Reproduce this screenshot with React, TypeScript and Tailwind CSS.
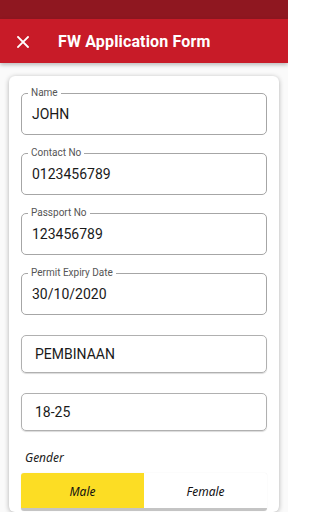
import React from "react";

function Outlined({ label, value, className = "" }: { label: string; value: string; className?: string }) {
  return (
    <div className={`relative h-[42px] rounded-[5px] border border-[#a6a6a6] flex items-center pl-[10px] ${className}`}>
      <span className="absolute left-[6px] top-[-7px] bg-white px-[3px] text-[10px] leading-[12px] text-[#555]">{label}</span>
      <span className="text-[14px] text-[#1a1a1a] pt-[1px]">{value}</span>
    </div>
  );
}

function Plain({ value, className = "" }: { value: string; className?: string }) {
  return (
    <div className={`h-[38px] rounded-[5px] border border-[#b0b0b0] shadow-[0_1px_1px_rgba(0,0,0,0.15)] flex items-center pl-[13px] ${className}`}>
      <span className="text-[14px] text-[#1a1a1a]">{value}</span>
    </div>
  );
}

export default function App() {
  return (
    <div className="w-[288px] h-[512px] overflow-hidden bg-[#fafafa] flex flex-col" style={{ fontFamily: "Roboto, 'Liberation Sans', sans-serif" }}>
      <div className="h-[19px] bg-[#8f1720] shrink-0" />
      <div className="h-[44px] pt-[2px] bg-[#c81b28] flex items-center shrink-0 shadow-[0_2px_4px_rgba(0,0,0,0.25)] relative z-10">
        <svg width="12" height="12" viewBox="0 0 12 12" className="ml-[17px]">
          <path d="M1 1L11 11M11 1L1 11" stroke="white" strokeWidth="1.8" strokeLinecap="square" />
        </svg>
        <span className="ml-[29px] text-white text-[16px] font-bold tracking-[0.15px]">FW Application Form</span>
      </div>
      <div className="mx-[9px] mt-[13px] bg-white rounded-[6px] shadow-[0_1px_5px_rgba(0,0,0,0.3)] px-[12px] pt-[17px] flex-1">
        <Outlined label="Name" value="JOHN" />
        <Outlined label="Contact No" value="0123456789" className="mt-[18px]" />
        <Outlined label="Passport No" value="123456789" className="mt-[18px]" />
        <Outlined label="Permit Expiry Date" value="30/10/2020" className="mt-[18px]" />
        <Plain value="PEMBINAAN" className="mt-[20px]" />
        <Plain value="18-25" className="mt-[20px]" />
        <div className="mt-[20px] ml-[4px] text-[12px] italic text-[#222] leading-[14px]" style={{ fontFamily: "'Noto Sans', sans-serif" }}>Gender</div>
        <div className="mt-[8px] flex h-[38px] rounded-[3px] overflow-hidden border-b-[3px] border-[#c4c4c4] shadow-[0_0_1px_rgba(0,0,0,0.15)]">
          <div className="w-1/2 bg-[#fcdd24] flex items-center justify-center pt-[2px] text-[12px] italic text-[#111]" style={{ fontFamily: "'Noto Sans', sans-serif" }}>Male</div>
          <div className="w-1/2 bg-white flex items-center justify-center pt-[2px] text-[12px] italic text-[#111]" style={{ fontFamily: "'Noto Sans', sans-serif" }}>Female</div>
        </div>
      </div>
    </div>
  );
}
